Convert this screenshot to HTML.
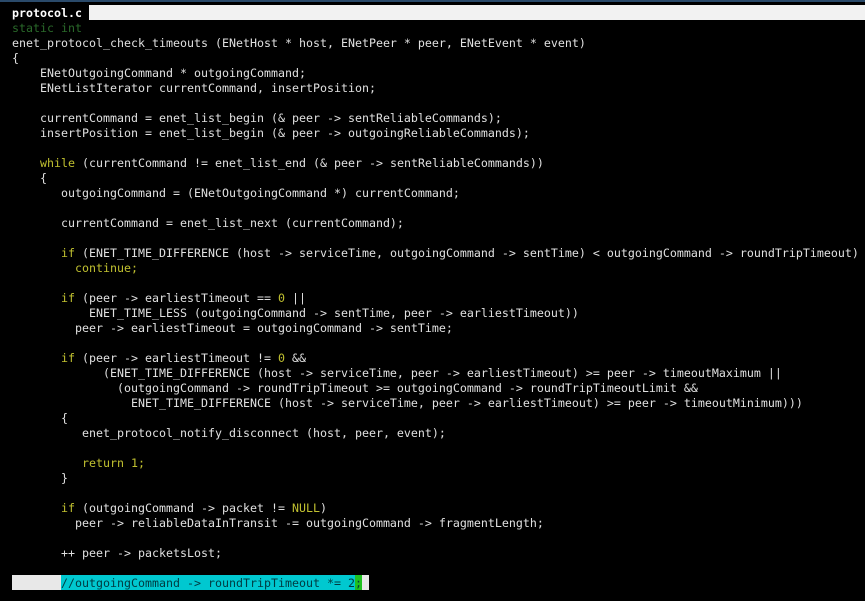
<!DOCTYPE html>
<html><head><style>
body{margin:0;background:#000;width:865px;height:601px;overflow:hidden;position:relative}
pre{position:absolute;left:12px;top:6px;margin:0;font-family:"DejaVu Sans Mono",monospace;font-size:11.63px;line-height:15px;color:#e0e0e0}
.k{color:#c0c030}.s{color:#2a6a2a}.t{color:#fff;font-weight:bold}
.bar{position:absolute;left:89px;top:5px;width:776px;height:15px;background:#f2f2f2}
.top{position:absolute;left:0;top:0;width:865px;height:2px;background:#2a4a6a}
.last{position:absolute;left:12px;top:575px;height:15px;width:357px;background:#e8e8e8}
.cy{position:absolute;left:61px;top:575px;height:15px;width:294px;background:#00c8d0}
.cur{position:absolute;left:355px;top:575px;height:15px;width:7px;background:#20c020}
</style></head><body>
<div class="top"></div><div class="bar"></div>
<div class="last"></div><div class="cy"></div><div class="cur"></div>
<pre><span class="t">protocol.c</span>
<span class="s">static int</span>
enet_protocol_check_timeouts (ENetHost * host, ENetPeer * peer, ENetEvent * event)
{
    ENetOutgoingCommand * outgoingCommand;
    ENetListIterator currentCommand, insertPosition;

    currentCommand = enet_list_begin (&amp; peer -&gt; sentReliableCommands);
    insertPosition = enet_list_begin (&amp; peer -&gt; outgoingReliableCommands);

    <span class="k">while</span> (currentCommand != enet_list_end (&amp; peer -&gt; sentReliableCommands))
    {
       outgoingCommand = (ENetOutgoingCommand *) currentCommand;

       currentCommand = enet_list_next (currentCommand);

       <span class="k">if</span> (ENET_TIME_DIFFERENCE (host -&gt; serviceTime, outgoingCommand -&gt; sentTime) &lt; outgoingCommand -&gt; roundTripTimeout)
         <span class="k">continue;</span>

       <span class="k">if</span> (peer -&gt; earliestTimeout == <span class="k">0</span> ||
           ENET_TIME_LESS (outgoingCommand -&gt; sentTime, peer -&gt; earliestTimeout))
         peer -&gt; earliestTimeout = outgoingCommand -&gt; sentTime;

       <span class="k">if</span> (peer -&gt; earliestTimeout != <span class="k">0</span> &amp;&amp;
             (ENET_TIME_DIFFERENCE (host -&gt; serviceTime, peer -&gt; earliestTimeout) &gt;= peer -&gt; timeoutMaximum ||
               (outgoingCommand -&gt; roundTripTimeout &gt;= outgoingCommand -&gt; roundTripTimeoutLimit &amp;&amp;
                 ENET_TIME_DIFFERENCE (host -&gt; serviceTime, peer -&gt; earliestTimeout) &gt;= peer -&gt; timeoutMinimum)))
       {
          enet_protocol_notify_disconnect (host, peer, event);

          <span class="k">return 1;</span>
       }

       <span class="k">if</span> (outgoingCommand -&gt; packet != <span class="k">NULL</span>)
         peer -&gt; reliableDataInTransit -= outgoingCommand -&gt; fragmentLength;

       ++ peer -&gt; packetsLost;

       <span style="color:#003a40">//outgoingCommand -&gt; roundTripTimeout *= 2;</span></pre>
</body></html>
